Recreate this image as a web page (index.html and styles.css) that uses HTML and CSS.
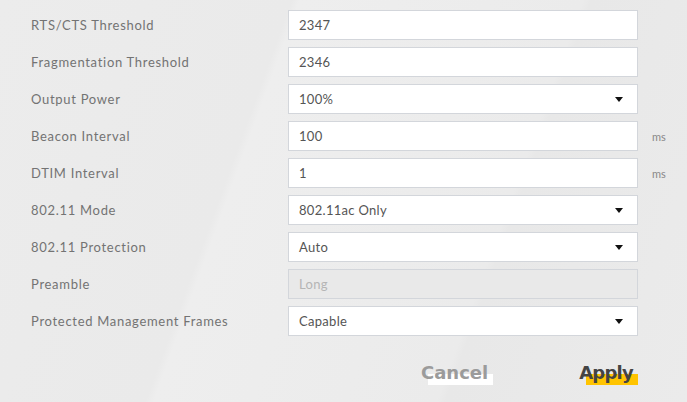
FILE: index.html
```html
<!DOCTYPE html>
<html>
<head>
<meta charset="utf-8">
<link rel="stylesheet" href="styles.css">
</head>
<body>
<div class="page">
  <div class="form">
    <div class="row"><span class="label">RTS/CTS Threshold</span><div class="field">2347</div><span class="unit"></span></div>
    <div class="row"><span class="label">Fragmentation Threshold</span><div class="field">2346</div><span class="unit"></span></div>
    <div class="row"><span class="label">Output Power</span><div class="field select">100%<span class="caret"></span></div><span class="unit"></span></div>
    <div class="row"><span class="label">Beacon Interval</span><div class="field">100</div><span class="unit">ms</span></div>
    <div class="row"><span class="label">DTIM Interval</span><div class="field">1</div><span class="unit">ms</span></div>
    <div class="row"><span class="label">802.11 Mode</span><div class="field select">802.11ac Only<span class="caret"></span></div><span class="unit"></span></div>
    <div class="row"><span class="label">802.11 Protection</span><div class="field select">Auto<span class="caret"></span></div><span class="unit"></span></div>
    <div class="row"><span class="label">Preamble</span><div class="field disabled">Long</div><span class="unit"></span></div>
    <div class="row"><span class="label">Protected Management Frames</span><div class="field select">Capable<span class="caret"></span></div><span class="unit"></span></div>
  </div>
  <div class="actions">
    <span class="btn cancel">Cancel</span>
    <span class="btn apply">Apply</span>
  </div>
</div>
</body>
</html>
```
FILE: styles.css
```css
html, body {
  margin: 0;
  padding: 0;
}
body {
  width: 687px;
  height: 402px;
  overflow: hidden;
  background: linear-gradient(110deg, #ececec 0%, #eaeaea 35%, #eeeeee 36%, #ebebeb 70%, #e8e8e8 71%, #ebebeb 100%);
  font-family: "Lato", "DejaVu Sans", sans-serif;
}
.page {
  padding: 10px 0 0 31px;
}
.form {
  display: flex;
  flex-direction: column;
  gap: 7px;
}
.row {
  display: grid;
  grid-template-columns: 257px 350px 40px;
  align-items: center;
  height: 30px;
}
.label {
  font-size: 13px;
  letter-spacing: 0.7px;
  color: #737373;
  line-height: 16px;
  margin-top: -1px;
}
.field {
  box-sizing: border-box;
  height: 30px;
  background: #fff;
  border: 1px solid #d3d6db;
  padding: 0 10px;
  display: flex;
  align-items: center;
  font-size: 13px;
  letter-spacing: 0.3px;
  color: #555;
  position: relative;
}
.field.disabled {
  background: #e9e9e9;
  color: #b5b5b5;
}
.caret {
  position: absolute;
  right: 14px;
  top: 12px;
  width: 0;
  height: 0;
  border-left: 4px solid transparent;
  border-right: 4px solid transparent;
  border-top: 5px solid #111;
}
.unit {
  font-size: 11px;
  color: #888;
  padding-left: 14px;
}
.actions {
  display: flex;
  padding-left: 390px;
  margin-top: 25px;
  gap: 91px;
}
.btn {
  font-family: "DejaVu Sans", sans-serif;
  font-size: 18px;
  font-weight: bold;
  position: relative;
  z-index: 0;
  line-height: 24px;
}
.btn::after {
  content: "";
  position: absolute;
  left: 7px;
  right: -5px;
  top: 13px;
  height: 11px;
  z-index: -1;
}
.cancel {
  color: #9b9b9b;
}
.cancel::after {
  background: #fff;
}
.apply {
  color: #444;
  letter-spacing: -0.8px;
}
.apply::after {
  background: #ffc400;
}
```
